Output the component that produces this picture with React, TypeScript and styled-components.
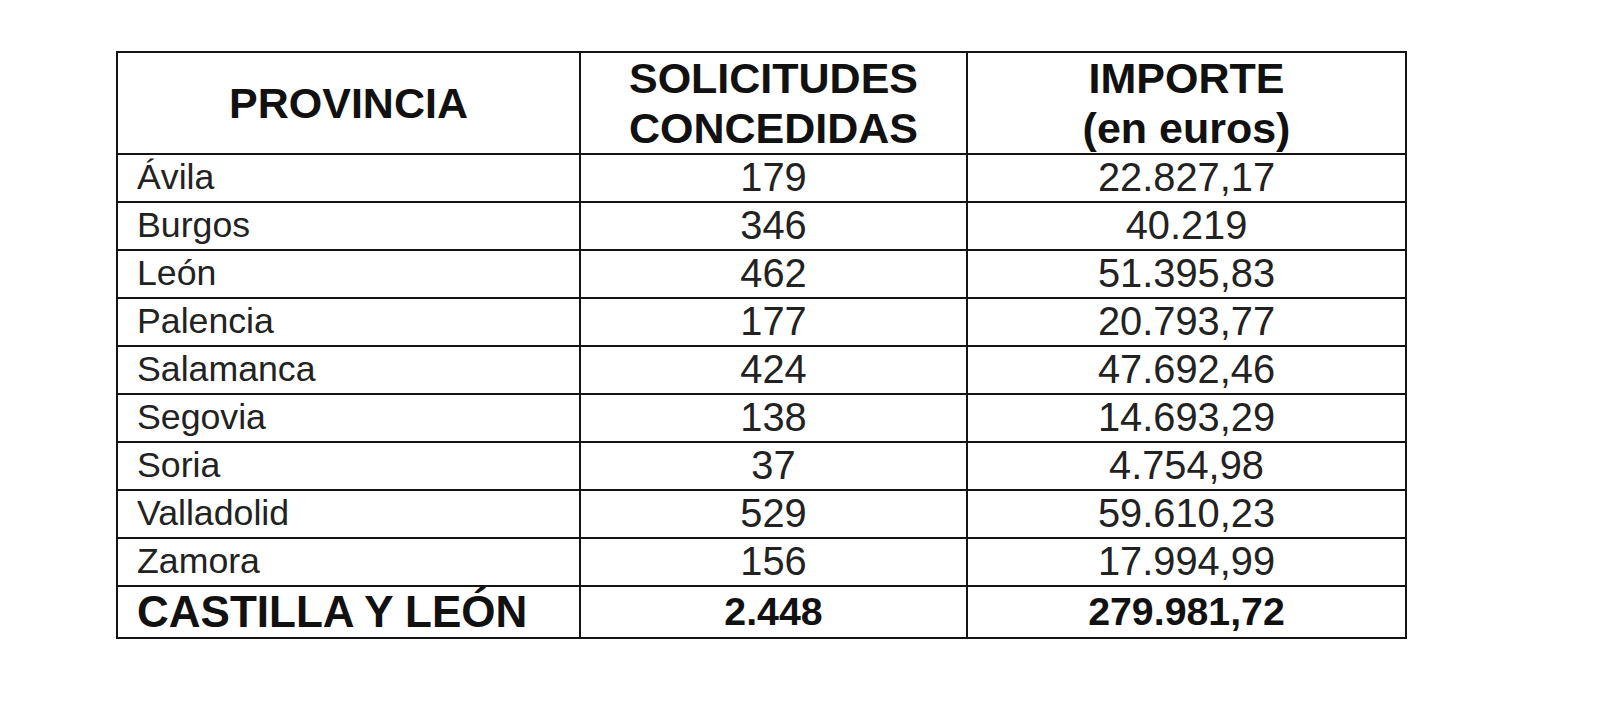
import { FunctionComponent } from "react";
import styled, { createGlobalStyle } from "styled-components";

const rows: [string, string, string][] = [
  ["Ávila", "179", "22.827,17"],
  ["Burgos", "346", "40.219"],
  ["León", "462", "51.395,83"],
  ["Palencia", "177", "20.793,77"],
  ["Salamanca", "424", "47.692,46"],
  ["Segovia", "138", "14.693,29"],
  ["Soria", "37", "4.754,98"],
  ["Valladolid", "529", "59.610,23"],
  ["Zamora", "156", "17.994,99"],
];

const App: FunctionComponent = () => (
  <Page>
    <GlobalStyle />
    <Table>
      <colgroup>
        <col style={{ width: 463 }} />
        <col style={{ width: 387 }} />
        <col style={{ width: 439 }} />
      </colgroup>
      <thead>
        <HeadRow>
          <HeadCell>PROVINCIA</HeadCell>
          <HeadCell>
            <HeadLine>SOLICITUDES</HeadLine>
            <HeadLine>CONCEDIDAS</HeadLine>
          </HeadCell>
          <HeadCell>
            <HeadLine>IMPORTE</HeadLine>
            <HeadLine>(en euros)</HeadLine>
          </HeadCell>
        </HeadRow>
      </thead>
      <tbody>
        {rows.map(([name, count, amount]) => (
          <Row key={name}>
            <NameCell>{name}</NameCell>
            <NumCell>{count}</NumCell>
            <NumCell>{amount}</NumCell>
          </Row>
        ))}
        <TotalRow>
          <NameCell $total>CASTILLA Y LEÓN</NameCell>
          <NumCell $total>2.448</NumCell>
          <NumCell $total>279.981,72</NumCell>
        </TotalRow>
      </tbody>
    </Table>
  </Page>
);

export default App;

const GlobalStyle = createGlobalStyle`
  html, body {
    margin: 0;
    padding: 0;
    background: #fff;
  }
  body {
    font-family: "Liberation Sans", Arial, sans-serif;
    color: #1c1c1c;
  }
`;

const Page = styled.div`
  padding: 51px 0 0 116px;
  height: 704px;
  box-sizing: border-box;
`;

const Table = styled.table`
  border-collapse: collapse;
  table-layout: fixed;
  width: 1289px;

  td,
  th {
    border: 2px solid #141414;
    padding: 0;
  }
`;

const HeadRow = styled.tr`
  height: 101px;
`;

const HeadCell = styled.th`
  font-size: 43px;
  font-weight: 700;
  color: #111;
  text-align: center;
  vertical-align: middle;
  line-height: 50px;
`;

const HeadLine = styled.div`
  white-space: nowrap;
`;

const Row = styled.tr`
  height: 48px;
`;

const TotalRow = styled.tr`
  height: 52px;
`;

const NameCell = styled.td<{ $total?: boolean }>`
  padding-left: 19px !important;
  font-size: ${(p) => (p.$total ? "44px" : "35.7px")};
  font-weight: ${(p) => (p.$total ? 700 : 400)};
  color: ${(p) => (p.$total ? "#111" : "#222")};
  line-height: 1;
  vertical-align: middle;
  white-space: nowrap;
`;

const NumCell = styled.td<{ $total?: boolean }>`
  text-align: center;
  font-size: ${(p) => (p.$total ? "39.3px" : "39.8px")};
  font-weight: ${(p) => (p.$total ? 700 : 400)};
  color: ${(p) => (p.$total ? "#111" : "#222")};
  line-height: 1;
  vertical-align: middle;
  white-space: nowrap;
`;
